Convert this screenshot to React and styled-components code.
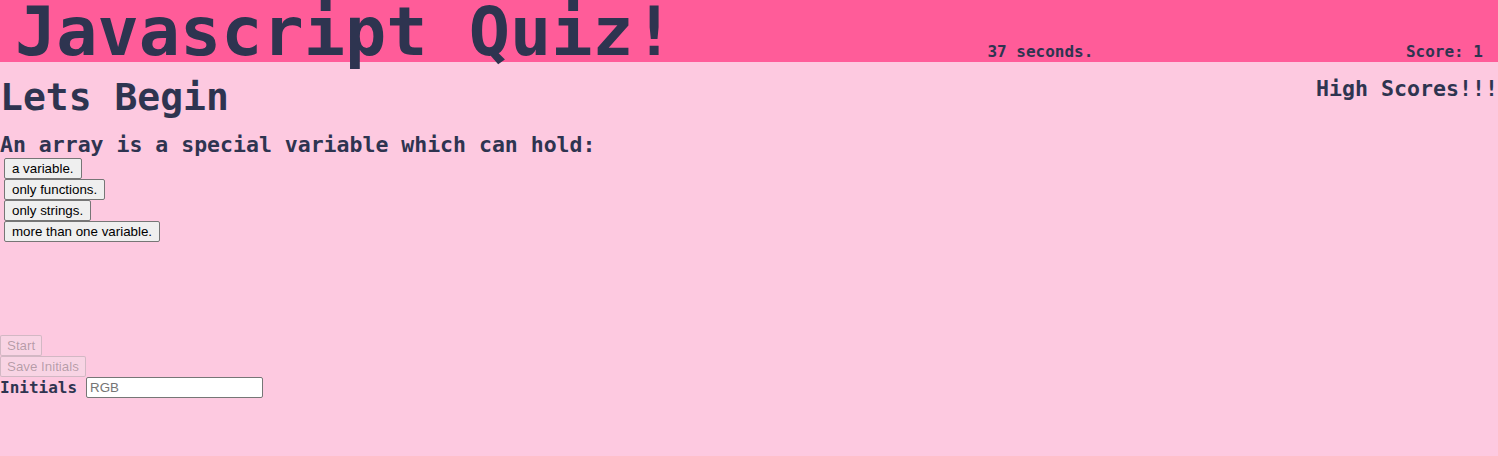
import styled, { createGlobalStyle } from "styled-components";

const GlobalStyle = createGlobalStyle`
    html, body {
        margin: 0;
        padding: 0;
        background-color: #fdc9e0;
        color: #2e3450;
        font-family: 'DejaVu Sans Mono', 'Liberation Mono', monospace;
    }
`

const Header = styled.header`
    box-sizing: border-box;
    height: 62px;
    background-color: #ff5c99;
    display: flex;
    justify-content: space-between;
    align-items: flex-end;
    padding: 0 15px;
`

const Title = styled.h1`
    align-self: flex-start;
    margin: 0;
    font-size: 68.5px;
    line-height: 62px;
    font-weight: 700;
    white-space: nowrap;
`

const HeaderText = styled.span`
    font-size: 16px;
    line-height: 20px;
    font-weight: 700;
`

const TopRow = styled.div`
    display: flex;
    justify-content: space-between;
    align-items: flex-start;
`

const Heading = styled.h1`
    margin: 12px 0 0;
    font-size: 38px;
    line-height: 46px;
    font-weight: 700;
`

const HighScores = styled.a`
    margin-top: 14px;
    font-size: 21.6px;
    line-height: 26px;
    font-weight: 700;
    color: inherit;
    text-decoration: none;
    cursor: pointer;
`

const Question = styled.h3`
    margin: 12px 0 0;
    font-size: 21.5px;
    line-height: 26px;
    font-weight: 700;
`

const Answers = styled.div`
    display: flex;
    flex-direction: column;
    align-items: flex-start;
    padding-left: 4px;
`

const Controls = styled.div`
    display: flex;
    flex-direction: column;
    align-items: flex-start;
    margin-top: 93px;
`

const Button = styled.button`
    box-sizing: border-box;
    font-family: 'Liberation Sans', Arial, sans-serif;
    font-size: 13.333px;
    line-height: 15px;
    padding: 2px 7px;
    margin: 0;
    border: 1px solid #767676;
    border-radius: 2px;
    background-color: #efefef;
    color: #000;

    &:disabled {
        padding: 2px 6px;
        color: rgba(16, 16, 16, 0.3);
        background-color: rgba(239, 239, 239, 0.3);
        border-color: rgba(118, 118, 118, 0.3);
    }
`

const InitialsRow = styled.div`
    display: flex;
    align-items: center;
    gap: 9px;
`

const Label = styled.label`
    font-size: 16px;
    font-weight: 700;
`

const Input = styled.input`
    box-sizing: border-box;
    width: 177px;
    height: 21px;
    padding: 1px 3px;
    border: 1px solid #767676;
    border-radius: 2px;
    background-color: #fff;
    font-family: 'Liberation Sans', Arial, sans-serif;
    font-size: 13.333px;

    &::placeholder {
        color: #757575;
    }
`

const answers = ["a variable.", "only functions.", "only strings.", "more than one variable."];

const App = () => {
    return (
        <>
            <GlobalStyle />
            <Header>
                <Title>Javascript Quiz!</Title>
                <HeaderText>37 seconds.</HeaderText>
                <HeaderText>Score: 1</HeaderText>
            </Header>
            <TopRow>
                <Heading>Lets Begin</Heading>
                <HighScores>High Scores!!!</HighScores>
            </TopRow>
            <Question>An array is a special variable which can hold:</Question>
            <Answers>
                {answers.map((a) => (
                    <Button key={a}>{a}</Button>
                ))}
            </Answers>
            <Controls>
                <Button disabled>Start</Button>
                <Button disabled>Save Initials</Button>
                <InitialsRow>
                    <Label htmlFor="initials">Initials</Label>
                    <Input id="initials" placeholder="RGB" />
                </InitialsRow>
            </Controls>
        </>
    )
}

export default App
